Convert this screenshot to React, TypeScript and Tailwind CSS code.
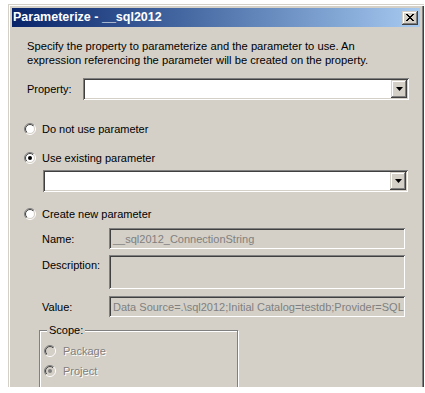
import React from "react";

const raised =
  "shadow-[inset_-1px_-1px_0_#404040,inset_1px_1px_0_#D4D0C8,inset_-2px_-2px_0_#808080,inset_2px_2px_0_#fff]";
const sunken =
  "shadow-[inset_1px_1px_0_#808080,inset_-1px_-1px_0_#fff,inset_2px_2px_0_#404040,inset_-2px_-2px_0_#D4D0C8]";

function Radio({ checked, disabled }: { checked?: boolean; disabled?: boolean }) {
  return (
    <svg width="12" height="12" viewBox="0 0 12 12" className="shrink-0">
      <defs>
        <linearGradient id="rOuter" x1="0" y1="0" x2="1" y2="1">
          <stop offset="50%" stopColor="#808080" />
          <stop offset="50%" stopColor="#ffffff" />
        </linearGradient>
        <linearGradient id="rInner" x1="0" y1="0" x2="1" y2="1">
          <stop offset="50%" stopColor="#404040" />
          <stop offset="50%" stopColor="#D4D0C8" />
        </linearGradient>
      </defs>
      <circle cx="6" cy="6" r="5.5" fill="none" stroke="url(#rOuter)" strokeWidth="1" />
      <circle cx="6" cy="6" r="4.5" fill={disabled ? "#D4D0C8" : "#ffffff"} stroke="url(#rInner)" strokeWidth="1" />
      {checked && <circle cx="6" cy="6" r="2" fill={disabled ? "#808080" : "#000000"} />}
    </svg>
  );
}

function Combo({ className }: { className: string }) {
  return (
    <div className={`flex h-[22px] bg-white p-[2px] ${sunken} ${className}`}>
      <div className="flex-1" />
      <div className={`w-[16px] bg-[#D4D0C8] flex items-center justify-center ${raised}`}>
        <svg width="7" height="4" viewBox="0 0 7 4">
          <polygon points="0,0 7,0 3.5,4" fill="#000" />
        </svg>
      </div>
    </div>
  );
}

function CloseGlyph() {
  const rows = ["XX....XX", ".XX..XX.", "..XXXX..", "...XX...", "..XXXX..", ".XX..XX.", "XX....XX"];
  const rects: React.ReactElement[] = [];
  rows.forEach((r, y) =>
    r.split("").forEach((c, x) => {
      if (c === "X") rects.push(<rect key={`${x}-${y}`} x={x} y={y} width="1" height="1" fill="#000" />);
    })
  );
  return (
    <svg width="8" height="7" viewBox="0 0 8 7" shapeRendering="crispEdges">
      {rects}
    </svg>
  );
}

export default function App() {
  return (
    <div className="w-[425px] h-[393px] bg-white overflow-hidden font-['Liberation_Sans',Arial,sans-serif] text-[11px] leading-[14px] text-black">
      <div className="ml-[8px] mt-[4px] w-[416px] h-[383px] overflow-hidden bg-[#D4D0C8] pt-[4px] px-[4px] shadow-[inset_1px_1px_0_#D4D0C8,inset_2px_2px_0_#fff,inset_-1px_0_0_#404040,inset_-2px_0_0_#808080]">
        {/* Title bar */}
        <div className="h-[19px] flex items-center justify-between pl-[1px] pr-[2px] bg-gradient-to-r from-[#0A246A] to-[#A6CAF0]">
          <span className="text-white font-bold text-[12.5px] leading-[19px]">Parameterize - __sql2012</span>
          <div className={`w-[16px] h-[14px] bg-[#D4D0C8] flex items-center justify-center ${raised}`}>
            <CloseGlyph />
          </div>
        </div>

        {/* Body */}
        <div className="pl-[12px]">
          <p className="mt-[12px] ml-[3px] text-[11.2px]">
            Specify the property to parameterize and the parameter to use. An
            <br />
            expression referencing the parameter will be created on the property.
          </p>

          <div className="mt-[11px] ml-[3px] flex items-center h-[22px]">
            <span className="w-[56px]">Property:</span>
            <Combo className="w-[326px]" />
          </div>

          <div className="mt-[22px] flex items-center h-[14px] gap-[6px]">
            <Radio />
            <span>Do not use parameter</span>
          </div>

          <div className="mt-[15px] flex items-center h-[14px] gap-[6px]">
            <Radio checked />
            <span>Use existing parameter</span>
          </div>

          <Combo className="mt-[5px] ml-[19px] w-[365px]" />

          <div className="mt-[15px] flex items-center h-[14px] gap-[6px]">
            <Radio />
            <span>Create new parameter</span>
          </div>

          <div className="mt-[7px] ml-[18px] flex items-center h-[21px]">
            <span className="w-[67px]">Name:</span>
            <div className={`w-[296px] h-[21px] pl-[4px] flex items-center text-[#808080] whitespace-nowrap overflow-hidden ${sunken}`}>
              __sql2012_ConnectionString
            </div>
          </div>

          <div className="mt-[6px] ml-[18px] flex items-start h-[34px]">
            <span className="w-[67px] mt-[3px]">Description:</span>
            <div className={`w-[296px] h-[34px] ${sunken}`} />
          </div>

          <div className="mt-[7px] ml-[18px] flex items-center h-[21px]">
            <span className="w-[67px]">Value:</span>
            <div className={`w-[296px] h-[21px] pl-[4px] flex items-center text-[#808080] whitespace-nowrap overflow-hidden ${sunken}`}>
              Data Source=.\sql2012;Initial Catalog=testdb;Provider=SQL
            </div>
          </div>

          <div className="relative mt-[13px] ml-[15px] w-[199px] h-[80px] border border-[#808080] shadow-[inset_1px_1px_0_#fff,1px_1px_0_#fff] pl-[4px] pt-[13px]">
            <span className="absolute top-[-8px] left-[7px] px-[2px] bg-[#D4D0C8]">Scope:</span>
            <div className="flex items-center h-[14px] gap-[7px]">
              <Radio disabled />
              <span className="text-[#808080] [text-shadow:1px_1px_0_#fff]">Package</span>
            </div>
            <div className="mt-[6px] flex items-center h-[14px] gap-[7px]">
              <Radio checked disabled />
              <span className="text-[#808080] [text-shadow:1px_1px_0_#fff]">Project</span>
            </div>
          </div>
        </div>
      </div>
    </div>
  );
}
